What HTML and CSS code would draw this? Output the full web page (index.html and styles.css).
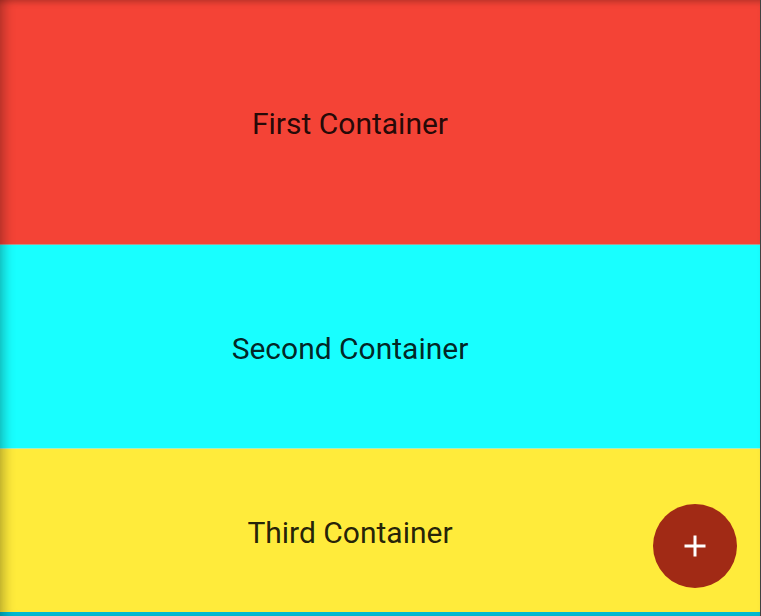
FILE: index.html
```html
<!DOCTYPE html>
<html>
<head>
<meta charset="utf-8">
<link rel="stylesheet" href="styles.css">
</head>
<body>
<div class="app">
  <div class="panel red"><span class="label">First Container</span></div>
  <div class="divider dark"></div>
  <div class="panel cyan"><span class="label">Second Container</span></div>
  <div class="divider light"></div>
  <div class="panel yellow"><span class="label">Third Container</span></div>
  <div class="bottom-bar"></div>
  <div class="shade"></div>
  <button class="fab" aria-label="Add">
    <svg width="24" height="24" viewBox="0 0 24 24"><path d="M12 1.5v21M1.5 12h21" stroke="#fff" stroke-width="3" fill="none"/></svg>
  </button>
</div>
</body>
</html>
```
FILE: styles.css
```css
html, body {
  margin: 0;
  padding: 0;
  background: #424242;
}
.app {
  position: relative;
  width: 760px;
  height: 616px;
  display: flex;
  flex-direction: column;
  font-family: Roboto, "Noto Sans", sans-serif;
  border-right: 1px solid #424242;
  overflow: hidden;
}
.panel {
  display: flex;
  align-items: center;
  justify-content: center;
  padding-right: 60px;
  padding-top: 3px;
  box-sizing: border-box;
}
.label {
  font-size: 30px;
  color: rgba(0,0,0,0.87);
}
.red { height: 244px; background: #f44336; }
.cyan { height: 203px; background: #18ffff; }
.yellow { height: 163px; background: #ffeb3b; }
.divider { height: 1px; }
.divider.dark { background: #b0998f; }
.divider.light { background: #a5f0c0; }
.bottom-bar { height: 4px; background: #00bcd4; }
.shade {
  position: absolute;
  inset: 0;
  pointer-events: none;
  box-shadow: inset 10px 0 12px -6px rgba(0,0,0,0.28), inset 0 6px 6px -4px rgba(0,0,0,0.22);
}
.fab {
  position: absolute;
  left: 653px;
  top: 504px;
  width: 84px;
  height: 84px;
  border-radius: 50%;
  border: none;
  padding: 0;
  background: #a12a15;
  display: flex;
  align-items: center;
  justify-content: center;
}
```
